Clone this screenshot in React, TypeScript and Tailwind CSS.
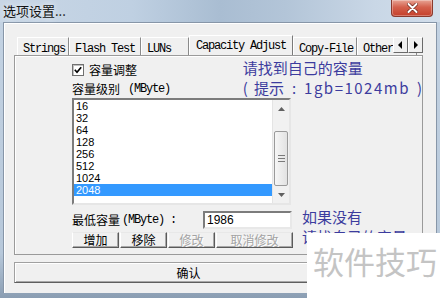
import React from 'react';

const tabs = [
  { label: 'Strings', width: 'w-[52px]' },
  { label: 'Flash Test', width: 'w-[72px]' },
  { label: 'LUNs', width: 'w-[48px]' },
  { label: 'Capacity Adjust', width: 'w-[104px]', active: true },
  { label: 'Copy-File', width: 'w-[64px]' },
  { label: 'Other', width: 'w-[60px]' },
];

const sizes = ['16', '32', '64', '128', '256', '512', '1024', '2048'];

const mono = "font-['Liberation_Mono','DejaVu_Sans_Mono',monospace] text-[12px] tracking-[-1.2px]";
const hint = "font-['Noto_Sans_CJK_SC',sans-serif] text-[15px] leading-[20px] text-[#3c3c9e]";

function Tab({ label, width, active }: { label: string; width: string; active?: boolean }) {
  if (active) {
    return (
      <div
        className={`relative z-10 -mb-px flex h-[21px] shrink-0 items-start border-l border-r border-t border-l-white border-r-[#7a7a7a] border-t-white bg-[#f0f0f0] pl-[6px] pt-[3px] ${width}`}
      >
        <span className={`${mono} leading-[14px] text-black`}>{label}</span>
      </div>
    );
  }
  return (
    <div
      className={`flex h-[18px] shrink-0 items-start border-l border-r border-t border-l-white border-r-[#8a8a8a] border-t-white pl-[5px] pt-[4px] ${width}`}
    >
      <span className={`${mono} leading-[14px] whitespace-nowrap text-black`}>{label}</span>
    </div>
  );
}

function ArrowButton({ dir }: { dir: 'left' | 'right' }) {
  return (
    <div className="flex h-[16px] w-[15px] items-center justify-center border border-b-[#6a6a6a] border-l-white border-r-[#6a6a6a] border-t-white bg-[#f0f0f0]">
      <svg width="5" height="8" viewBox="0 0 5 8">
        {dir === 'left' ? <polygon points="4,0 4,8 0,4" fill="#000" /> : <polygon points="1,0 1,8 5,4" fill="#000" />}
      </svg>
    </div>
  );
}

function Btn({ children, width, disabled }: { children: React.ReactNode; width: string; disabled?: boolean }) {
  return (
    <div
      className={`flex h-[16px] items-center justify-center border border-b-[#5a5a5a] border-l-white border-r-[#5a5a5a] border-t-[#e8e8e8] bg-[#f0f0f0] shadow-[inset_-1px_-1px_0_#a8a8a8] ${width}`}
    >
      <span
        className={
          disabled
            ? 'text-[12px] leading-[14px] text-[#a3a3a3] [text-shadow:1px_1px_0_#fff]'
            : 'text-[12px] leading-[14px] text-black'
        }
      >
        {children}
      </span>
    </div>
  );
}

export default function App() {
  return (
    <div className="relative h-[298px] w-[440px] overflow-hidden bg-[linear-gradient(180deg,#c4d3e3_0%,#b7c8da_85%,#8a9db2_100%)] font-['Noto_Sans_CJK_SC',sans-serif]">
      {/* title bar */}
      <div className="flex h-[22px] items-start bg-[linear-gradient(90deg,#c8d6e5_0%,#bfd0e2_30%,#a9bdd2_50%,#b3c5d8_65%,#c9d7e6_85%,#d2deeb_100%)]">
        <span className="pl-[3px] pt-[2px] text-[13px] leading-[18px] text-[#111] [text-shadow:0_0_6px_#fff]">选项设置...</span>
        <div className="ml-auto mr-[7px] flex h-[17px] w-[42px] items-center justify-center rounded-b-[4px] border border-t-0 border-[#8a3a2e] bg-[linear-gradient(180deg,#e8a495_0%,#d4604c_45%,#c4402c_100%)] shadow-[inset_0_0_0_1px_rgba(255,255,255,0.3)]">
          <svg width="11" height="10" viewBox="0 0 11 10">
            <path d="M1.5 1 L9.5 9 M9.5 1 L1.5 9" stroke="#6b2419" strokeWidth="3.4" strokeLinecap="round" />
            <path d="M1.5 1 L9.5 9 M9.5 1 L1.5 9" stroke="#fff" strokeWidth="2" strokeLinecap="round" />
          </svg>
        </div>
      </div>

      {/* dialog body */}
      <div className="ml-[3px] flex h-[271px] w-[434px] flex-col border-l border-r border-t border-[#8796a8] bg-[#f0f0f0] pl-[10px] shadow-[inset_1px_1px_0_#fff]">
        {/* tab strip */}
        <div className="relative ml-[3px] mt-[12px] flex h-[20px] w-[406px] items-end">
          <div className="flex h-[21px] w-[406px] items-end overflow-hidden">
            {tabs.map((t) => (
              <Tab key={t.label} label={t.label} width={t.width} active={t.active} />
            ))}
          </div>
          <div className="absolute right-0 top-[2px] flex">
            <ArrowButton dir="left" />
            <ArrowButton dir="right" />
          </div>
        </div>

        {/* tab pane */}
        <div className="flex h-[200px] w-[409px] flex-col border border-[#9a9a9a] pl-[57px] shadow-[inset_1px_1px_0_#fff]">
          <div className="flex h-[42px]">
            <div className="w-[171px] pt-[6px]">
              <div className="flex h-[16px] items-center">
                <div className="flex h-[12px] w-[12px] items-center justify-center border border-[#707070] bg-white shadow-[inset_1px_1px_0_#c0c0c0]">
                  <svg width="8" height="8" viewBox="0 0 8 8">
                    <path d="M0.8 3.8 L3 6.2 L7.2 1.2" stroke="#000" strokeWidth="1.7" fill="none" />
                  </svg>
                </div>
                <span className="ml-[5px] text-[12px] leading-[16px] text-black">容量调整</span>
              </div>
              <div className="mt-[2px] flex h-[18px] items-center">
                <span className="text-[12px] leading-[16px] text-black">容量级别</span>
                <span className={`${mono} ml-[8px] leading-[16px] text-black`}>(MByte)</span>
              </div>
            </div>
            <div className={`pt-[2px] ${hint}`}>
              <div>请找到自己的容量</div>
              <div className="flex whitespace-nowrap">
                <span>(</span>
                <span className="ml-[6px]">提示</span>
                <span className="ml-[8px]">:</span>
                <span className="ml-[8px] tracking-[1.5px]">1gb=1024mb</span>
                <span className="ml-[7px]">)</span>
              </div>
            </div>
          </div>

          {/* list box */}
          <div className="flex h-[107px] w-[219px] border-2 border-b-[#e6e6e6] border-l-[#7c7c7c] border-r-[#e6e6e6] border-t-[#7c7c7c] bg-white">
            <div className="flex flex-1 flex-col">
              {sizes.map((s) => (
                <div
                  key={s}
                  className={
                    s === '2048'
                      ? "h-[12px] bg-[#3399ff] pl-[2px] font-['Liberation_Sans',Arial,sans-serif] text-[11px] leading-[12px] text-white"
                      : "h-[12px] pl-[2px] font-['Liberation_Sans',Arial,sans-serif] text-[11px] leading-[12px] text-black"
                  }
                >
                  {s}
                </div>
              ))}
            </div>
            <div className="flex w-[17px] flex-col border-l border-[#e4e4e4] bg-[#f1f1f1]">
              <div className="flex h-[17px] items-center justify-center">
                <svg width="7" height="4" viewBox="0 0 7 4">
                  <polygon points="0,4 7,4 3.5,0" fill="#606060" />
                </svg>
              </div>
              <div className="flex flex-1 flex-col justify-end px-[1px]">
                <div className="flex h-[55px] flex-col items-center justify-center gap-[2px] rounded-[2px] border border-[#9a9a9a] bg-[linear-gradient(90deg,#f6f6f6,#e2e2e2)]">
                  <div className="h-px w-[7px] bg-[#7a7a7a]" />
                  <div className="h-px w-[7px] bg-[#7a7a7a]" />
                  <div className="h-px w-[7px] bg-[#7a7a7a]" />
                </div>
              </div>
              <div className="flex h-[17px] items-center justify-center">
                <svg width="7" height="4" viewBox="0 0 7 4">
                  <polygon points="0,0 7,0 3.5,4" fill="#606060" />
                </svg>
              </div>
            </div>
          </div>

          <div className="flex">
            <div className="w-[221px] pt-[6px]">
              <div className="flex h-[18px] items-center">
                <span className="text-[12px] leading-[16px] text-black">最低容量</span>
                <span className={`${mono} ml-[2px] leading-[16px] text-black`}>(MByte)</span>
                <span className={`${mono} ml-[6px] leading-[16px] text-black`}>:</span>
                <div className="ml-auto mr-[1px] flex h-[18px] w-[89px] items-center border-2 border-b-[#e8e8e8] border-l-[#7c7c7c] border-r-[#e8e8e8] border-t-[#7c7c7c] bg-white pl-[2px]">
                  <span className="font-['Liberation_Sans',Arial,sans-serif] text-[12px] leading-[14px] text-black">1986</span>
                </div>
              </div>
              <div className="mt-[3px] flex gap-[1px]">
                <Btn width="w-[47px]">增加</Btn>
                <Btn width="w-[47px]">移除</Btn>
                <Btn width="w-[47px]" disabled>
                  修改
                </Btn>
                <Btn width="w-[77px]" disabled>
                  取消修改
                </Btn>
              </div>
            </div>
            <div className={`pl-[9px] pt-[2px] ${hint}`}>
              <div>如果没有</div>
              <div>请找自己的容量</div>
            </div>
          </div>
        </div>

        {/* confirm */}
        <div className="mt-[7px] flex h-[21px] w-[349px] items-center justify-center border border-b-[#5e5e5e] border-l-[#a0a0a0] border-r-[#5e5e5e] border-t-[#a0a0a0] bg-[#f0f0f0] shadow-[inset_1px_1px_0_#fff,inset_-1px_-1px_0_#a8a8a8]">
          <span className="text-[12px] leading-[14px] text-black">确认</span>
        </div>
      </div>

      {/* watermark */}
      <div className="absolute left-[307px] top-[233px] h-[65px] w-[133px] bg-white pl-[6px] pt-[12px]">
        <span className="text-[31px] leading-[31px] text-[#c4c4c4]">软件技巧</span>
      </div>
    </div>
  );
}
